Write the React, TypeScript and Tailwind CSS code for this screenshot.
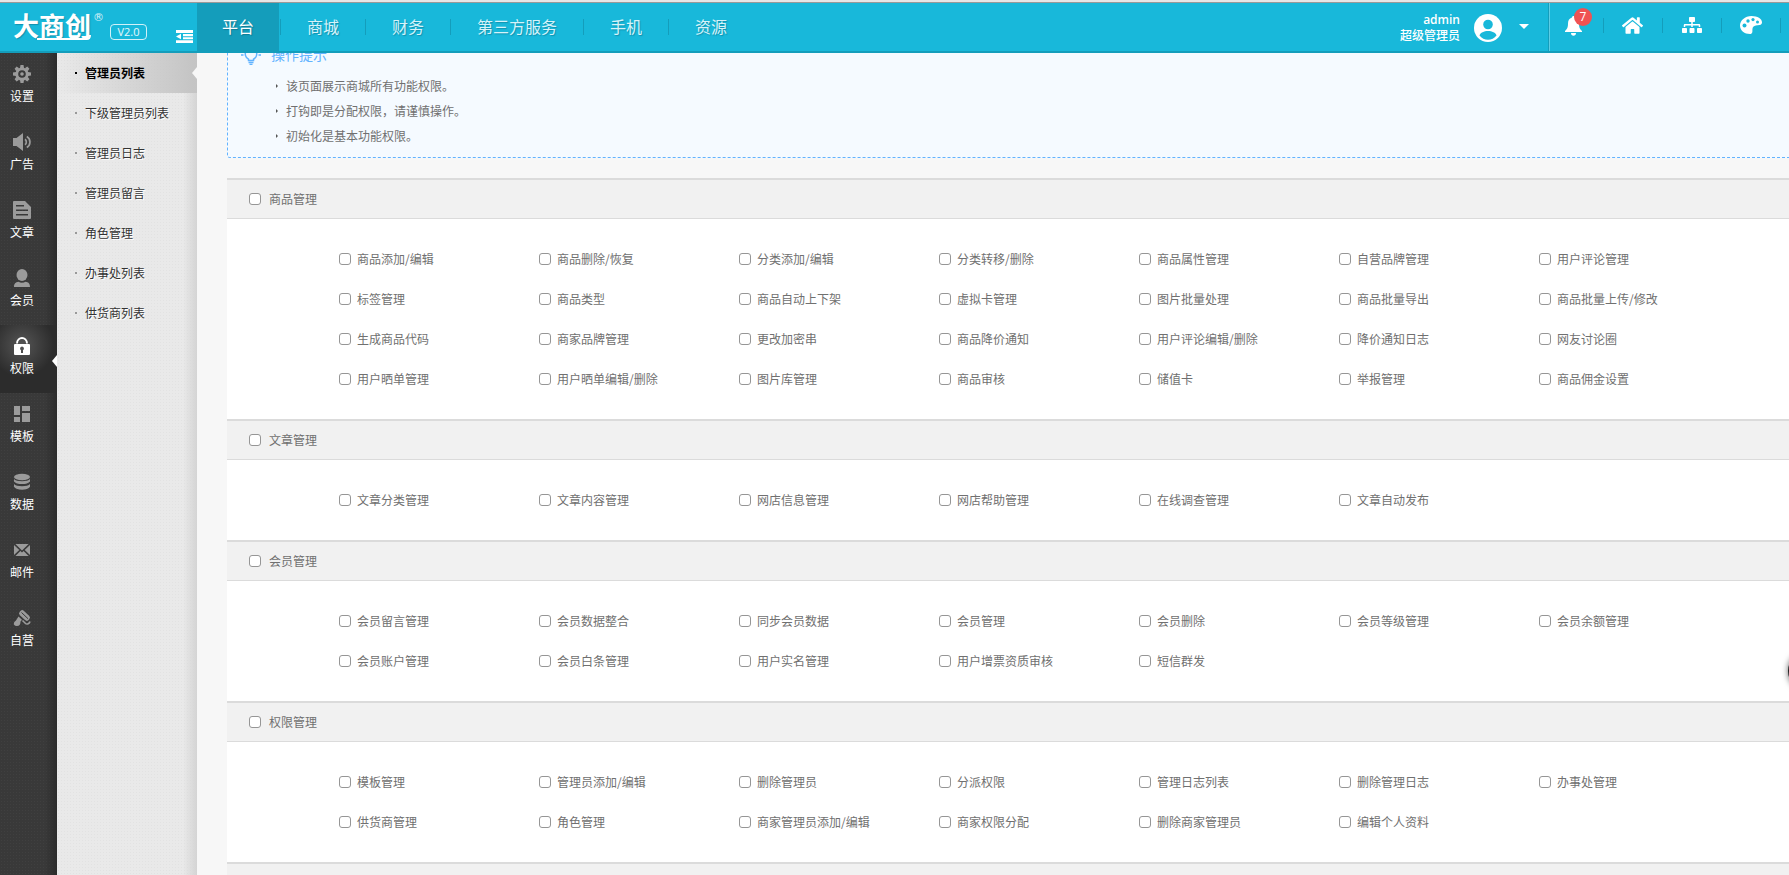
import { useState } from 'react';
import type { ReactNode } from 'react';
import { FaHome, FaSitemap } from 'react-icons/fa';

interface MenuItem {
    label: string;
    icon: ReactNode;
}

interface PermissionGroup {
    name: string;
    items: string[];
}

const topNav = ['平台', '商城', '财务', '第三方服务', '手机', '资源'];

const subMenu = ['管理员列表', '下级管理员列表', '管理员日志', '管理员留言', '角色管理', '办事处列表', '供货商列表'];

const tips = ['该页面展示商城所有功能权限。', '打钩即是分配权限，请谨慎操作。', '初始化是基本功能权限。'];

const groups: PermissionGroup[] = [
    {
        name: '商品管理',
        items: [
            '商品添加/编辑', '商品删除/恢复', '分类添加/编辑', '分类转移/删除', '商品属性管理', '自营品牌管理', '用户评论管理',
            '标签管理', '商品类型', '商品自动上下架', '虚拟卡管理', '图片批量处理', '商品批量导出', '商品批量上传/修改',
            '生成商品代码', '商家品牌管理', '更改加密串', '商品降价通知', '用户评论编辑/删除', '降价通知日志', '网友讨论圈',
            '用户晒单管理', '用户晒单编辑/删除', '图片库管理', '商品审核', '储值卡', '举报管理', '商品佣金设置',
        ],
    },
    {
        name: '文章管理',
        items: ['文章分类管理', '文章内容管理', '网店信息管理', '网店帮助管理', '在线调查管理', '文章自动发布'],
    },
    {
        name: '会员管理',
        items: [
            '会员留言管理', '会员数据整合', '同步会员数据', '会员管理', '会员删除', '会员等级管理', '会员余额管理',
            '会员账户管理', '会员白条管理', '用户实名管理', '用户增票资质审核', '短信群发',
        ],
    },
    {
        name: '权限管理',
        items: [
            '模板管理', '管理员添加/编辑', '删除管理员', '分派权限', '管理日志列表', '删除管理日志', '办事处管理',
            '供货商管理', '角色管理', '商家管理员添加/编辑', '商家权限分配', '删除商家管理员', '编辑个人资料',
        ],
    },
];

function Svg({ children }: { children: ReactNode }) {
    return (
        <svg viewBox="0 0 18 18" className="size-[18px]" fill="currentColor" aria-hidden="true">
            {children}
        </svg>
    );
}

const gearAngles = [0, 45, 90, 135, 180, 225, 270, 315];

const railMenu: MenuItem[] = [
    {
        label: '设置',
        icon: (
            <Svg>
                <circle cx="9" cy="9" r="5.2" fill="none" stroke="currentColor" strokeWidth="2.8" />
                <circle cx="9" cy="9" r="1.8" />
                {gearAngles.map(a => (
                    <path key={a} d="M7 3 7.5 0h3L11 3z" transform={`rotate(${a} 9 9)`} />
                ))}
            </Svg>
        ),
    },
    {
        label: '广告',
        icon: (
            <Svg>
                <path d="M0 5h3.5L10 0v18l-6.500-5H0z" />
                <path d="M12 6.200c1.800 1.300 1.800 4.300 0 5.600M13.800 3.500c4.200 2.400 4.200 8.600 0 11" fill="none" stroke="currentColor" strokeWidth="1.700" />
            </Svg>
        ),
    },
    {
        label: '文章',
        icon: (
            <Svg>
                <path fillRule="evenodd" d="M1 0h11l6 6v11a1 1 0 0 1-1 1H1a1 1 0 0 1-1-1V1a1 1 0 0 1 1-1zM3 4v1.500h8V4zM3 8.500V10h12V8.500zM3 13v1.500h12V13z" />
            </Svg>
        ),
    },
    {
        label: '会员',
        icon: (
            <Svg>
                <ellipse cx="9" cy="6" rx="5.500" ry="6" />
                <path d="M1 18c0-3.500 1.500-4.500 4.500-5.200C7.500 14 10.500 14 12.500 12.800 15.500 13.500 17 14.500 17 18z" />
            </Svg>
        ),
    },
    {
        label: '权限',
        icon: (
            <Svg>
                <path d="M4 6.500C4.200-.800 13.800-.800 14 6.500" fill="none" stroke="currentColor" strokeWidth="1.900" />
                <path fillRule="evenodd" d="M2 7h14a1 1 0 0 1 1 1v9a1 1 0 0 1-1 1H2a1 1 0 0 1-1-1V8a1 1 0 0 1 1-1zM9 9.500a2 2 0 0 0-1 3.700V16h2v-2.800a2 2 0 0 0-1-3.700z" />
            </Svg>
        ),
    },
    {
        label: '模板',
        icon: (
            <Svg>
                <path d="M1 1h6v9H1zM9 1h8v5H9zM1 12h6v5H1zM9 8h8v9H9z" />
            </Svg>
        ),
    },
    {
        label: '数据',
        icon: (
            <Svg>
                <ellipse cx="9" cy="4" rx="8" ry="3.200" />
                <path d="M1 6c2 3 14 3 16 0v2.500c-2 3.400-14 3.400-16 0zM1 11c2 3 14 3 16 0v2.800c-2 4-14 4-16 0z" />
            </Svg>
        ),
    },
    {
        label: '邮件',
        icon: (
            <Svg>
                <path d="M2.400 3h13.200L9 9.500zM1 4l5.300 5L1 14zM17 4v10l-5.300-5zM2.400 15l5-5L9 11.500l1.600-1.500 5 5z" />
            </Svg>
        ),
    },
    {
        label: '自营',
        icon: (
            <Svg>
                <rect x="-6" y="-3" width="12" height="6" rx="2.500" transform="translate(11.500 6.500) rotate(43)" />
                <path d="m8.500 3.500 6.500 6.200" stroke="#3a3a3a" strokeWidth="1" />
                <path d="m5.500 7.500 3.500 3.300-1.500 1.700c.2 2.500-1 4.500-3.500 4.500-2.200.2-3.800-1.500-3-3.300.6-1.400 1.800-1.700 2.600-3.200z" />
                <path d="m9.500 11.500 3 3c1.500 1.200 4 .2 4.500-2" fill="none" stroke="currentColor" strokeWidth="1.600" />
            </Svg>
        ),
    },
];

const checkboxClass =
    'm-0 size-3 shrink-0 appearance-none rounded-[3px] border border-[#969696] bg-white checked:border-[#149dbb] checked:bg-[#18b8da]';

function Logo() {
    return (
        <div className="flex w-[197px] shrink-0 items-start pl-[13px] text-white">
            <a href="#home" className="relative mt-[6px] text-[26px] leading-[32px] font-bold [text-shadow:1px_1px_1px_#1291ae]">
                大商创
                <svg viewBox="0 0 54 6" className="absolute right-0 bottom-0 h-[6px] w-[54px]" fill="none" stroke="white" strokeWidth="2" aria-hidden="true">
                    <path d="M0 4h50q3 0 3-4" />
                </svg>
            </a>
            <span className="mt-[7px] ml-[2px] w-[11px] font-['DejaVu_Sans'] text-[11px] leading-4 opacity-80">®</span>
            <span className="mt-[21px] ml-[6px] flex h-4 w-[37px] items-center justify-center rounded-[4px] border border-white/80 font-['Open_Sans'] text-[11px] leading-3 text-white/90">
                V2.0
            </span>
            <button type="button" aria-label="收起菜单" className="mt-[27px] mr-1 ml-auto">
                <svg viewBox="0 0 17 13" className="h-[13px] w-[17px]" fill="white" aria-hidden="true">
                    <path d="M0 0h17v3H0zM7 4h10v2.300H7zM7 7.200h10v2H7zM0 10.200h17V13H0zM5 3.800v5.400L0 6.500z" />
                </svg>
            </button>
        </div>
    );
}

function Header() {
    const divider = <span className="mb-[3px] h-[15px] w-px shrink-0 bg-[#149dbb]" />;

    return (
        <header className="flex h-[50px] shrink-0 border-b-2 border-[#149dbb] bg-[#18b8da]">
            <Logo />
            <nav className="flex">
                {topNav.map((item, i) => (
                    <div key={item} className="flex items-center">
                        {i > 0 && <span className="mx-px h-4 w-px bg-[#149dbb]" />}
                        <a
                            href={`#nav-${i}`}
                            className={
                                i === 0
                                    ? 'flex h-[48px] items-center bg-[#149dbb] px-[25px] pb-[2px] text-[16px] text-white [text-shadow:1px_1px_1px_#0e7c95]'
                                    : 'flex h-[48px] items-center px-[25px] pb-[2px] text-[16px] text-[#d6f3fa] [text-shadow:1px_1px_1px_#1291ae]'
                            }
                        >
                            {item}
                        </a>
                    </div>
                ))}
            </nav>

            <div className="ml-auto flex items-center pr-2 text-white">
                <div className="text-right text-[12px] leading-[15px]">
                    <p className="font-['Open_Sans'] font-semibold">admin</p>
                    <p className="font-medium">超级管理员</p>
                </div>
                <button type="button" aria-label="账户" className="mt-[2px] ml-[14px] flex items-center gap-[17px]">
                    <svg viewBox="0 0 28 28" className="size-7" aria-hidden="true">
                        <circle cx="14" cy="14" r="14" fill="white" />
                        <circle cx="14" cy="10.500" r="4.800" fill="#18b8da" />
                        <path d="M5.500 21.500c1.500-6 15.500-6 17 0-4 5.700-13 5.700-17 0z" fill="#18b8da" />
                    </svg>
                    <svg viewBox="0 0 10 5" className="mb-1 h-[5px] w-[10px]" fill="white" aria-hidden="true">
                        <path d="M0 0h10L5 5z" />
                    </svg>
                </button>
                <span className="ml-[19px] h-full w-[2px] border-r border-l border-r-[#5dcde5] border-l-[#149dbb]" />
                <button type="button" aria-label="消息" className="relative flex w-[53px] justify-center pr-[6px] pb-[2px]">
                    <svg viewBox="0 0 17 20" className="h-5 w-[17px]" fill="white" aria-hidden="true">
                        <path d="M8.500 0C9.400 0 10 .6 10 1.600c3 .9 4 3.200 4 5.900 0 4 .8 5.500 3 7.500v1H0v-1c2.200-2 3-3.500 3-7.500 0-2.700 1-5 4-5.900C7 .6 7.600 0 8.500 0zM6 17h5c0 1.800-1 2.800-2.500 2.800S6 18.800 6 17z" />
                    </svg>
                    <span className="absolute -top-2 right-[11px] flex size-[18px] items-center justify-center rounded-full bg-[#ef5253] font-['Open_Sans'] text-[12px] leading-3">7</span>
                </button>
                {divider}
                <a href="#store" aria-label="首页" className="flex w-[58px] justify-center pr-[2px] pb-[4px]">
                    <FaHome className="size-[21px]" />
                </a>
                {divider}
                <a href="#sitemap" aria-label="网站地图" className="flex w-[58px] justify-center pb-[4px]">
                    <FaSitemap className="size-5" />
                </a>
                {divider}
                <a href="#theme" aria-label="主题" className="flex w-[58px] justify-center pb-[4px]">
                    <svg viewBox="0 0 22 18" className="h-[18px] w-[22px]" aria-hidden="true">
                        <path d="M11.500 0C17.500 0 22 2.800 22 6.200c0 2.600-2 2.800-5 3-3 .2-4.600 1.600-4.600 4.300 0 2 .4 4.500-2.400 4.500C4.500 18 0 14.500 0 9.500S5 0 11.500 0z" fill="white" />
                        <g fill="#18b8da">
                            <circle cx="4.500" cy="9.500" r="2" />
                            <circle cx="8" cy="5" r="1.700" />
                            <circle cx="13" cy="3.600" r="1.600" />
                            <circle cx="17.500" cy="6" r="1.500" />
                        </g>
                    </svg>
                </a>
                {divider}
            </div>
        </header>
    );
}

function Rail() {
    return (
        <nav className="w-[57px] shrink-0 bg-[linear-gradient(to_right,transparent_45px,#2b2b2b),radial-gradient(#404040_1px,transparent_1px)] bg-[size:100%_100%,3px_3px] bg-[#393939]">
            {railMenu.map(item => {
                const active = item.label === '权限';
                return (
                    <a
                        key={item.label}
                        href={`#${item.label}`}
                        className={
                            active
                                ? 'relative flex h-[68px] flex-col items-center bg-[radial-gradient(circle_at_22px_20px,#555,#2c2c2c_32px)] pt-3 pr-[13px] text-white'
                                : 'relative flex h-[68px] flex-col items-center pt-3 pr-[13px] text-[#9b9b9b]'
                        }
                    >
                        {item.icon}
                        <span className="mt-1 text-[12px] leading-[18px] text-white">{item.label}</span>
                        {active && (
                            <span className="absolute top-[30px] right-0 border-y-[6px] border-r-[5px] border-y-transparent border-r-white" />
                        )}
                    </a>
                );
            })}
        </nav>
    );
}

function SubMenu() {
    return (
        <nav className="w-[140px] shrink-0 bg-[linear-gradient(to_right,rgba(210,210,210,0)_126px,#d4d4d4),radial-gradient(#e2e2e2_1px,transparent_1px)] bg-[size:100%_100%,3px_3px] bg-[#e9e9e9]">
            {subMenu.map((item, i) => (
                <a
                    key={item}
                    href={`#sub-${i}`}
                    className={
                        i === 0
                            ? 'relative flex h-10 items-center bg-linear-to-r from-transparent to-[#c4c4c4] pl-[18px] text-[12px] font-bold text-black'
                            : 'relative flex h-10 items-center pl-[18px] text-[12px] text-[#333] [text-shadow:1px_1px_0_#fff]'
                    }
                >
                    <span className={i === 0 ? 'mr-2 size-[2px] bg-black' : 'mr-2 size-[2px] bg-[#999]'} />
                    {item}
                    {i === 0 && (
                        <span className="absolute top-[14px] right-0 border-y-[6px] border-r-[5px] border-y-transparent border-r-[#f7f7f7]" />
                    )}
                </a>
            ))}
        </nav>
    );
}

function Tips() {
    return (
        <section className="h-[128px] rounded-bl-[3px] border border-r-0 border-dashed border-[#62b3ff] bg-[#f5faff] pt-2 pl-[13px]">
            <div className="flex h-[30px] items-center text-[#62b3ff]">
                <svg viewBox="0 0 20 22" className="h-[22px] w-5" fill="none" stroke="currentColor" strokeWidth="1.500" aria-hidden="true">
                    <path d="M7.500 17.500v-1.300a5.700 5.700 0 1 1 5 0v1.300zM7.500 19.500h5M8.500 21.500h3M0 12h2.500M17.500 12H20M10 1v2M3 4.500l1.200 1.200M17 4.500l-1.200 1.200" />
                </svg>
                <h2 className="ml-[10px] text-[14px]">操作提示</h2>
            </div>
            <ul className="mt-1 pl-[35px] text-[12px] leading-[25px] text-[#707070]">
                {tips.map(tip => (
                    <li key={tip} className="flex items-center">
                        <span className="mr-2 border-y-2 border-l-2 border-y-transparent border-l-[#555]" />
                        {tip}
                    </li>
                ))}
            </ul>
        </section>
    );
}

export default function App() {
    const [checked, setChecked] = useState<string[]>([]);

    const toggle = (keys: string[], on: boolean) => {
        setChecked(prev => {
            const rest = prev.filter(k => !keys.includes(k));
            return on ? [...rest, ...keys] : rest;
        });
    };

    return (
        <div className="flex h-screen flex-col overflow-hidden bg-[#f7f7f7] font-['Noto_Sans_CJK_SC',sans-serif]">
            <div className="h-[3px] shrink-0 border-b border-[#999] bg-[#e6e6e6]" />
            <Header />
            <div className="flex min-h-0 flex-1">
                <Rail />
                <SubMenu />
                <main className="min-w-0 flex-1 overflow-hidden pl-[30px]">
                    {/* scrolled a little, so the tips start under the header */}
                    <div className="-mt-[23px]">
                        <Tips />
                        <form className="mt-5 border-b-[41px] border-[#f1f1f1] text-[12px] text-[#707070]">
                            {groups.map(group => {
                                const keys = group.items.map(item => `${group.name}.${item}`);
                                return (
                                    <fieldset key={group.name}>
                                        <div className="h-[41px] border-t-2 border-b border-[#dbdbdb] bg-[#f1f1f1] pl-[22px]">
                                            <label className="inline-flex h-[38px] items-center gap-2">
                                                <input
                                                    type="checkbox"
                                                    className={checkboxClass}
                                                    checked={keys.every(k => checked.includes(k))}
                                                    onChange={e => toggle(keys, e.target.checked)}
                                                />
                                                {group.name}
                                            </label>
                                        </div>
                                        <div className="flex flex-wrap bg-white py-5 pl-[112px]">
                                            {group.items.map((item, i) => (
                                                <div key={item} className="w-[200px]">
                                                    <label className="inline-flex h-10 items-center gap-[6px] align-top">
                                                        <input
                                                            type="checkbox"
                                                            className={checkboxClass}
                                                            checked={checked.includes(keys[i])}
                                                            onChange={e => toggle([keys[i]], e.target.checked)}
                                                        />
                                                        {item}
                                                    </label>
                                                </div>
                                            ))}
                                        </div>
                                    </fieldset>
                                );
                            })}
                            <div className="h-[2px] bg-[#dbdbdb]" />
                        </form>
                    </div>
                </main>
            </div>
            <button type="button" aria-label="工具" className="fixed top-[651px] -right-[39px] size-10 rounded-full bg-[#222] shadow-[0_0_6px_rgba(0,0,0,0.6)]" />
        </div>
    );
}
